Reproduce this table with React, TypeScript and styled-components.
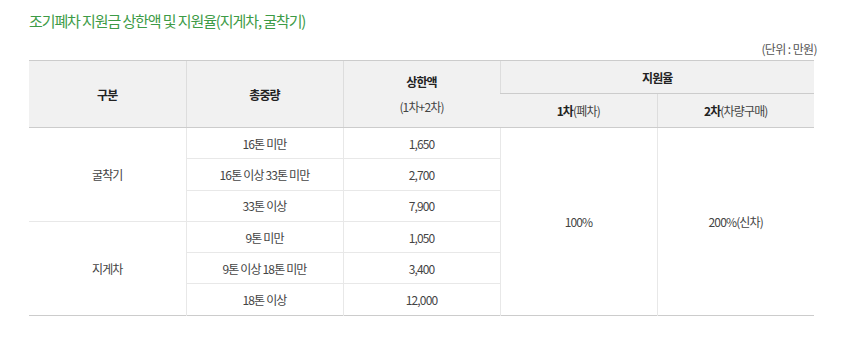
import React from 'react'
import styled, { createGlobalStyle } from 'styled-components'

const GlobalStyle = createGlobalStyle`
  html, body {
    margin: 0;
    padding: 0;
    background: #fff;
  }
  body {
    font-family: "Noto Sans CJK KR", "Noto Sans", sans-serif;
    color: #444;
  }
`

const Wrapper = styled.div`
  width: 847px;
  padding: 11px 0 0 29px;
  box-sizing: border-box;
`

const Title = styled.h3`
  margin: 0;
  font-size: 15px;
  font-weight: 400;
  line-height: 20px;
  letter-spacing: -1.1px;
  color: #3d9b46;
`

const Unit = styled.p`
  width: 788px;
  margin: 9px 0 0;
  text-align: right;
  font-size: 12px;
  line-height: 18px;
  letter-spacing: -0.6px;
  color: #555;
`

const Table = styled.table`
  width: 785px;
  margin-top: 2px;
  border-collapse: collapse;
  table-layout: fixed;
  border-top: 1px solid #333;
  border-bottom: 1px solid #ccc;
  font-size: 12px;
  letter-spacing: -0.85px;
`

const Th = styled.th<{ $h?: number }>`
  height: ${p => p.$h ?? 32}px;
  padding: 0;
  background: #f1f1f1;
  font-weight: 700;
  color: #222;
  text-align: center;
  vertical-align: middle;
  border-left: 1px solid #ddd;
  border-top: 1px solid #ccc;
  border-bottom: 1px solid #ccc;

  &:first-child {
    border-left: 0;
  }
`

const Lines = styled.div`
  display: flex;
  flex-direction: column;
  gap: 7px;
  line-height: 18px;
`

const Light = styled.span`
  font-weight: 400;
  color: #444;
`

const Td = styled.td<{ $first?: boolean }>`
  height: 30.3px;
  padding: 0;
  text-align: center;
  vertical-align: middle;
  color: #444;
  border-top: 1px solid #e8e8e8;
  border-left: ${p => (p.$first ? '0' : '1px solid #e8e8e8')};
`

const groups = [
  {
    name: '굴착기',
    rows: [
      ['16톤 미만', '1,650'],
      ['16톤 이상 33톤 미만', '2,700'],
      ['33톤 이상', '7,900'],
    ],
  },
  {
    name: '지게차',
    rows: [
      ['9톤 미만', '1,050'],
      ['9톤 이상 18톤 미만', '3,400'],
      ['18톤 이상', '12,000'],
    ],
  },
]

export default function App() {
  return (
    <Wrapper>
      <GlobalStyle />
      <Title>조기폐차 지원금 상한액 및 지원율(지게차, 굴착기)</Title>
      <Unit>(단위 : 만원)</Unit>
      <Table>
        <thead>
          <tr>
            <Th rowSpan={2}>구분</Th>
            <Th rowSpan={2}>총중량</Th>
            <Th rowSpan={2}>
              <Lines>
                <span>상한액</span>
                <Light>(1차+2차)</Light>
              </Lines>
            </Th>
            <Th colSpan={2} $h={32}>지원율</Th>
          </tr>
          <tr>
            <Th $h={33}>
              1차<Light>(폐차)</Light>
            </Th>
            <Th $h={33}>
              2차<Light>(차량구매)</Light>
            </Th>
          </tr>
        </thead>
        <tbody>
          {groups.map((g, gi) =>
            g.rows.map((r, ri) => (
              <tr key={`${gi}-${ri}`}>
                {ri === 0 && (
                  <Td $first rowSpan={3}>
                    {g.name}
                  </Td>
                )}
                <Td>{r[0]}</Td>
                <Td>{r[1]}</Td>
                {gi === 0 && ri === 0 && (
                  <>
                    <Td rowSpan={6}>100%</Td>
                    <Td rowSpan={6}>200%(신차)</Td>
                  </>
                )}
              </tr>
            ))
          )}
        </tbody>
      </Table>
    </Wrapper>
  )
}
